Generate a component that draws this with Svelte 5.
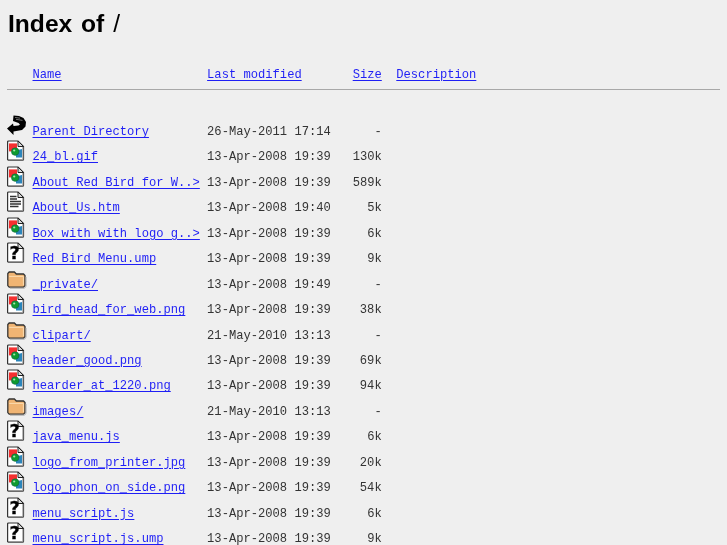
<script>
  const rows = [
    ['back', 'Parent Directory', '26-May-2011 17:14', '-'],
    ['image', '24_bl.gif', '13-Apr-2008 19:39', '130k'],
    ['image', 'About Red Bird for W..>', '13-Apr-2008 19:39', '589k'],
    ['text', 'About_Us.htm', '13-Apr-2008 19:40', '5k'],
    ['image', 'Box with with logo g..>', '13-Apr-2008 19:39', '6k'],
    ['unknown', 'Red Bird Menu.ump', '13-Apr-2008 19:39', '9k'],
    ['folder', '_private/', '13-Apr-2008 19:49', '-'],
    ['image', 'bird_head_for_web.png', '13-Apr-2008 19:39', '38k'],
    ['folder', 'clipart/', '21-May-2010 13:13', '-'],
    ['image', 'header_good.png', '13-Apr-2008 19:39', '69k'],
    ['image', 'hearder_at_1220.png', '13-Apr-2008 19:39', '94k'],
    ['folder', 'images/', '21-May-2010 13:13', '-'],
    ['unknown', 'java_menu.js', '13-Apr-2008 19:39', '6k'],
    ['image', 'logo_from_printer.jpg', '13-Apr-2008 19:39', '20k'],
    ['image', 'logo_phon_on_side.png', '13-Apr-2008 19:39', '54k'],
    ['unknown', 'menu_script.js', '13-Apr-2008 19:39', '6k'],
    ['unknown', 'menu_script.js.ump', '13-Apr-2008 19:39', '9k']
  ];
</script>

{#snippet page()}
  <path d="M.6 2Q.6 1 1.6 1H11L16.5 6.5V19.2Q16.5 20.2 15.5 20.2H1.6Q.6 20.2 .6 19.2Z" fill="#fff" stroke="#333" stroke-width="1.2"/>
  <path d="M2 19.7H15.9V7" fill="none" stroke="#999" stroke-width="1"/>
  <path d="M11 1V6.5H16.5Z" fill="#d8d8d8" stroke="#222" stroke-width="1"/>
{/snippet}

{#snippet icon(kind)}
  <svg class="icon" width="20" height="21" viewBox="0 0 20 21" aria-hidden="true">
    {#if kind === 'back'}
      <path d="M6.5 .5 L12 1 L16.5 3 L19 7 L18.5 11.5 L15 15 L6.5 16.5 L6.5 20 L0 13.5 L6 8.5 L6.5 11 L11.5 10.5 L13 9.5 L11.5 8 L6 6Z" fill="#000"/>
      <path d="M8 2.4L13 3.2M9 4.3L15.5 5.4" stroke="#8a8a8a" stroke-width="0.8"/>
    {:else if kind === 'folder'}
      <g transform="translate(0 3)">
        <path d="M.8 6V2.6L2.2 1H7.4L9.3 3H16.5L18 4.5V14.6L16.5 16.2H2.2L.8 14.6Z" fill="#f0b473" stroke="#333" stroke-width="1.3"/>
        <path d="M2.2 5.4H16.4V14.2" fill="none" stroke="#fbdcb0" stroke-width="1"/>
        <path d="M3 17.2H17.2L19 15.6V6" fill="none" stroke="#aaa" stroke-width="1"/>
      </g>
    {:else if kind === 'image'}
      {@render page()}
      <rect x="2" y="3.4" width="8" height="8" fill="#f53030"/>
      <path d="M9 10.5L15 9V17.5H9Z" fill="#2b85bb"/>
      <circle cx="8.2" cy="11.6" r="3.8" fill="#0f9a30" stroke="#0a5c40" stroke-width="0.5"/>
      <circle cx="7.2" cy="10.5" r="1.1" fill="#a7e6ad"/>
    {:else if kind === 'text'}
      {@render page()}
      <path d="M3 5.5H9.5M3 8H10M3 10.5H14M3 13H14M3 15.5H11.5" stroke="#333" stroke-width="1.4"/>
    {:else}
      {@render page()}
      <text x="2.6" y="16.6" class="q">?</text>
    {/if}
  </svg>
{/snippet}

<main>
  <h1>Index of <span class="root">/</span></h1>
  <header class="row head">
    <span></span>
    <a href="#name">Name</a>
    <a href="#date">Last modified</a>
    <a class="size" href="#size">Size</a>
    <a class="desc" href="#desc">Description</a>
  </header>
  <hr />
  <div class="list">
    {#each rows as [kind, name, date, size]}
      <div class="row">
        {@render icon(kind)}
        <a href="#file">{name}</a>
        <span>{date}</span>
        <span class="size">{size}</span>
      </div>
    {/each}
  </div>
</main>

<style>
  :global(body) {
    margin: 0;
    background: #efefef;
    overflow: hidden;
  }
  main {
    height: 545px;
    overflow: hidden;
    padding: 0 7px;
    width: 713px;
    font-family: "Liberation Mono", monospace;
    font-size: 12.13px;
    color: #333;
    filter: blur(0.3px);
  }
  h1 {
    margin: 0;
    padding: 9px 0 0 1px;
    height: 55px;
    font: bold 24.6px/30px "Liberation Sans", Arial, sans-serif;
    word-spacing: 2px;
    color: #000;
  }
  .root {
    font-weight: normal;
  }
  a {
    color: #1f1ff5;
    text-underline-offset: 2px;
  }
  .row {
    display: grid;
    grid-template-columns: 25.5px 174.6px 145.6px 29px 14.6px auto;
    align-items: end;
    height: 25.45px;
    line-height: 14px;
    white-space: pre;
  }
  .head {
    height: 22px;
    align-items: center;
  }
  .head .desc { grid-column: 6; }
  .head .size { grid-column: 4; }
  .size { text-align: right; }
  hr {
    margin: 3px 0 0;
    height: 0;
    border: 0;
    border-top: 1px solid #a8a8a8;
  }
  .list { margin-top: 23.6px; }
  .icon {
    display: block;
    overflow: visible;
    margin-bottom: 3px;
  }
  .q {
    font: bold 17.5px "DejaVu Sans", sans-serif;
    fill: #000;
    stroke: #000;
    stroke-width: 0.3px;
  }
</style>
